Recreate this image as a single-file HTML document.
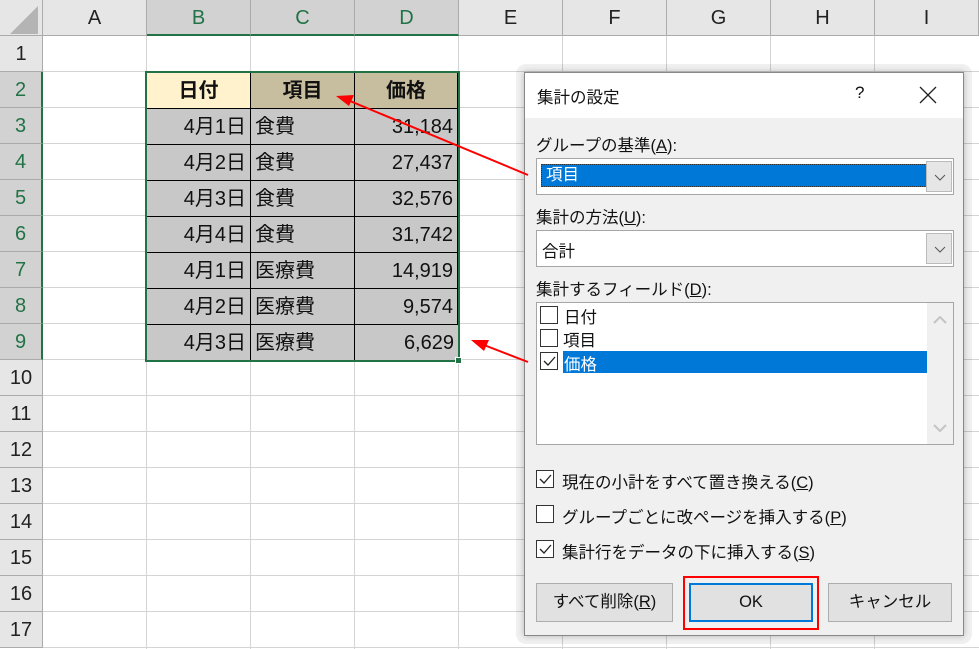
<!DOCTYPE html>
<html><head><meta charset="utf-8"><style>
*{margin:0;padding:0;box-sizing:border-box}
body{width:979px;height:649px;overflow:hidden;background:#fff;position:relative;font-family:"Liberation Sans","Noto Sans CJK JP",sans-serif}
.a{position:absolute}
.ch{position:absolute;top:0;height:36px;background:#e6e6e6;border-right:1px solid #ababab;border-bottom:1px solid #ababab;font-size:20px;color:#222;text-align:center;line-height:36px}
.ch.s{background:#d2d2d2;color:#217346;border-bottom:2px solid #217346}
.rh{position:absolute;left:0;width:43px;height:36px;background:#e6e6e6;border-bottom:1px solid #ababab;border-right:1px solid #ababab;font-size:20px;color:#222;text-align:center;line-height:36px}
.rh.s{background:#d2d2d2;color:#217346;border-right:2px solid #217346}
.vl{position:absolute;top:36px;width:1px;height:613px;background:#d4d4d4}
.hl{position:absolute;left:43px;height:1px;width:936px;background:#d4d4d4}
.c{position:absolute;height:36px;background:#c8c8c8;border-right:1.5px solid #000;border-bottom:1.5px solid #000;font-size:20px;line-height:36px;color:#111;padding:0 4px}
.r{text-align:right}
.h{font-weight:bold;text-align:center;background:#c7bd9f}
.dl{font-family:"Liberation Sans","Noto Sans CJK JP",sans-serif;font-size:16.5px;color:#111;position:absolute}
.cb{position:absolute;width:18px;height:18px;border:1px solid #333;background:#fff}
.btn{position:absolute;height:39px;background:#e1e1e1;border:1px solid #adadad;font-size:16.5px;text-align:center;line-height:37px;color:#111}
u{text-decoration:underline}
</style></head><body>
<div class="vl" style="left:146px"></div><div class="vl" style="left:250px"></div><div class="vl" style="left:354px"></div><div class="vl" style="left:458px"></div><div class="vl" style="left:562px"></div><div class="vl" style="left:666px"></div><div class="vl" style="left:770px"></div><div class="vl" style="left:874px"></div>
<div class="hl" style="top:71px"></div><div class="hl" style="top:107px"></div><div class="hl" style="top:143px"></div><div class="hl" style="top:179px"></div><div class="hl" style="top:215px"></div><div class="hl" style="top:251px"></div><div class="hl" style="top:287px"></div><div class="hl" style="top:323px"></div><div class="hl" style="top:359px"></div><div class="hl" style="top:395px"></div><div class="hl" style="top:431px"></div><div class="hl" style="top:467px"></div><div class="hl" style="top:503px"></div><div class="hl" style="top:539px"></div><div class="hl" style="top:575px"></div><div class="hl" style="top:611px"></div><div class="hl" style="top:647px"></div>
<div class="ch" style="left:0;width:43px"><div class="a" style="left:10px;top:6px;width:0;height:0;border-left:28px solid transparent;border-bottom:28px solid #b4b4b4"></div></div>
<div class="ch" style="left:43px;width:104px">A</div>
<div class="ch s" style="left:147px;width:104px">B</div>
<div class="ch s" style="left:251px;width:104px">C</div>
<div class="ch s" style="left:355px;width:104px">D</div>
<div class="ch" style="left:459px;width:104px">E</div>
<div class="ch" style="left:563px;width:104px">F</div>
<div class="ch" style="left:667px;width:104px">G</div>
<div class="ch" style="left:771px;width:104px">H</div>
<div class="ch" style="left:875px;width:104px">I</div>
<div class="rh" style="top:36px">1</div>
<div class="rh s" style="top:72px">2</div><div class="rh s" style="top:108px">3</div><div class="rh s" style="top:144px">4</div><div class="rh s" style="top:180px">5</div><div class="rh s" style="top:216px">6</div><div class="rh s" style="top:252px">7</div><div class="rh s" style="top:288px">8</div><div class="rh s" style="top:324px">9</div>
<div class="rh" style="top:360px">10</div><div class="rh" style="top:396px">11</div><div class="rh" style="top:432px">12</div><div class="rh" style="top:468px">13</div><div class="rh" style="top:504px">14</div><div class="rh" style="top:540px">15</div><div class="rh" style="top:576px">16</div><div class="rh" style="top:612px">17</div>
<div class="c h" style="left:147px;top:73px;width:104px;background:#fff2cc">日付</div>
<div class="c h" style="left:251px;top:73px;width:104px">項目</div>
<div class="c h" style="left:355px;top:73px;width:103px">価格</div>
<div class="c r" style="left:147px;top:109px;width:104px">4月1日</div><div class="c" style="left:251px;top:109px;width:104px">食費</div><div class="c r" style="left:355px;top:109px;width:103px">31,184</div>
<div class="c r" style="left:147px;top:145px;width:104px">4月2日</div><div class="c" style="left:251px;top:145px;width:104px">食費</div><div class="c r" style="left:355px;top:145px;width:103px">27,437</div>
<div class="c r" style="left:147px;top:181px;width:104px">4月3日</div><div class="c" style="left:251px;top:181px;width:104px">食費</div><div class="c r" style="left:355px;top:181px;width:103px">32,576</div>
<div class="c r" style="left:147px;top:217px;width:104px">4月4日</div><div class="c" style="left:251px;top:217px;width:104px">食費</div><div class="c r" style="left:355px;top:217px;width:103px">31,742</div>
<div class="c r" style="left:147px;top:253px;width:104px">4月1日</div><div class="c" style="left:251px;top:253px;width:104px">医療費</div><div class="c r" style="left:355px;top:253px;width:103px">14,919</div>
<div class="c r" style="left:147px;top:289px;width:104px">4月2日</div><div class="c" style="left:251px;top:289px;width:104px">医療費</div><div class="c r" style="left:355px;top:289px;width:103px">9,574</div>
<div class="c r" style="left:147px;top:325px;width:104px;border-bottom:none">4月3日</div><div class="c" style="left:251px;top:325px;width:104px;border-bottom:none">医療費</div><div class="c r" style="left:355px;top:325px;width:103px;border-bottom:none;border-right:none">6,629</div>
<div class="a" style="left:145px;top:71px;width:315px;height:291px;border:2px solid #217346"></div>
<div class="a" style="left:455px;top:357px;width:7px;height:7px;background:#217346;border:1px solid #fff"></div>
<div class="a" style="left:516px;top:64px;width:456px;height:580px;border-radius:10px;background:rgba(0,0,0,0.06)"></div>
<div class="a" style="left:524px;top:72px;width:440px;height:564px;background:#f0f0f0;border:1px solid #888;box-shadow:0 0 6px rgba(0,0,0,.25)">
 <div class="a" style="left:0;top:0;width:438px;height:45px;background:#fff"></div>
 <div class="dl" style="left:12px;top:11px">集計の設定</div>
 <div class="dl" style="left:330px;top:10px;font-size:17px">?</div>
 <svg class="a" style="left:394px;top:13px" width="18" height="18"><path d="M1 1L17 17M17 1L1 17" stroke="#222" stroke-width="1.3"/></svg>
 <div class="dl" style="left:11px;top:59px">グループの基準(<u>A</u>):</div>
 <div class="a" style="left:11px;top:85px;width:418px;height:37px;background:#fff;border:1px solid #a6a6a6">
  <div class="a" style="left:4px;top:5px;width:388px;height:23px;background:#0078d7;border:1px dotted #333;color:#fff;font-size:16.5px;line-height:21px;padding-left:4px">項目</div>
  <div class="a" style="left:389px;top:2px;width:26px;height:31px;background:#e6e6e6;border:1px solid #bbb"><svg class="a" style="left:7px;top:12px" width="12" height="8"><path d="M1 1L6 6L11 1" stroke="#555" fill="none"/></svg></div>
 </div>
 <div class="dl" style="left:11px;top:131px">集計の方法(<u>U</u>):</div>
 <div class="a" style="left:11px;top:157px;width:418px;height:37px;background:#fff;border:1px solid #a6a6a6">
  <div class="a" style="left:5px;top:7px;font-size:16.5px;color:#111">合計</div>
  <div class="a" style="left:389px;top:2px;width:26px;height:31px;background:#e6e6e6;border:1px solid #bbb"><svg class="a" style="left:7px;top:12px" width="12" height="8"><path d="M1 1L6 6L11 1" stroke="#555" fill="none"/></svg></div>
 </div>
 <div class="dl" style="left:11px;top:203px">集計するフィールド(<u>D</u>):</div>
 <div class="a" style="left:11px;top:229px;width:418px;height:143px;background:#fff;border:1px solid #a6a6a6">
  <div class="a" style="left:390px;top:0;width:26px;height:141px;background:#f0f0f0"></div>
  <svg class="a" style="left:396px;top:13px" width="14" height="8"><path d="M1 7L7 1L13 7" stroke="#c4c4c4" stroke-width="2" fill="none"/></svg>
  <svg class="a" style="left:396px;top:121px" width="14" height="8"><path d="M1 1L7 7L13 1" stroke="#c4c4c4" stroke-width="2" fill="none"/></svg>
  <div class="cb" style="left:3px;top:3px"></div><div class="dl" style="left:27px;top:1px">日付</div>
  <div class="cb" style="left:3px;top:26px"></div><div class="dl" style="left:26px;top:24px">項目</div>
  <div class="a" style="left:26px;top:48px;width:364px;height:22px;background:#0078d7"></div>
  <div class="cb" style="left:3px;top:49px"><svg width="16" height="16"><path d="M3 8L7 12L14 4" stroke="#222" stroke-width="1.3" fill="none"/></svg></div>
  <div class="dl" style="left:27px;top:48px;color:#fff">価格</div>
 </div>
 <div class="cb" style="left:11px;top:397px"><svg width="16" height="16"><path d="M3 8L7 12L14 4" stroke="#222" stroke-width="1.3" fill="none"/></svg></div>
 <div class="dl" style="left:37px;top:396px">現在の小計をすべて置き換える(<u>C</u>)</div>
 <div class="cb" style="left:11px;top:432px"></div>
 <div class="dl" style="left:37px;top:431px">グループごとに改ページを挿入する(<u>P</u>)</div>
 <div class="cb" style="left:11px;top:467px"><svg width="16" height="16"><path d="M3 8L7 12L14 4" stroke="#222" stroke-width="1.3" fill="none"/></svg></div>
 <div class="dl" style="left:37px;top:466px">集計行をデータの下に挿入する(<u>S</u>)</div>
 <div class="btn" style="left:11px;top:510px;width:137px">すべて削除(<u>R</u>)</div>
 <div class="btn" style="left:164px;top:510px;width:124px;border:2px solid #0078d7;line-height:35px">OK</div>
 <div class="btn" style="left:303px;top:510px;width:124px">キャンセル</div>
</div>
<div class="a" style="left:683px;top:576px;width:136px;height:54px;border:2px solid #ff0000"></div>
<svg class="a" style="left:0;top:0" width="979" height="649">
 <line x1="528" y1="175" x2="350" y2="101" stroke="#ff0000" stroke-width="2"/>
 <polygon points="336,96 354,95 349,106" fill="#ff0000"/>
 <line x1="528" y1="362" x2="484" y2="345" stroke="#ff0000" stroke-width="2"/>
 <polygon points="471,340 489,340 484,351" fill="#ff0000"/>
</svg>
</body></html>
